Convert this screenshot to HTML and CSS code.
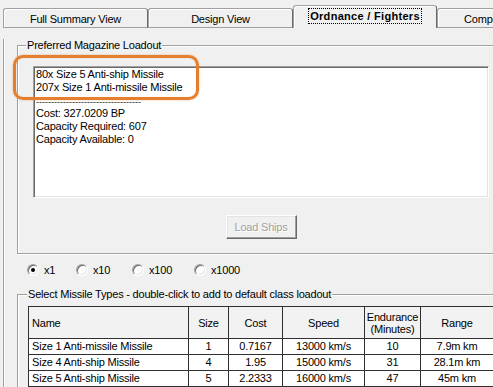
FILE: index.html
```html
<!DOCTYPE html>
<html>
<head>
<meta charset="utf-8">
<link rel="stylesheet" href="styles.css">
</head>
<body>
<div class="window">
  <div class="tabstrip">
    <div class="tab">Full Summary View</div>
    <div class="tab">Design View</div>
    <div class="tab active"><span class="focus">Ordnance / Fighters</span></div>
    <div class="tab">Component Design</div>
  </div>
  <div class="page">
    <fieldset class="group loadout">
      <legend>Preferred Magazine Loadout</legend>
      <div class="loadout-body">
        <div class="textbox">
          <div>80x Size 5 Anti-ship Missile</div>
          <div>207x Size 1 Anti-missile Missile</div>
          <div class="dashes">-----------------------------------</div>
          <div>Cost: 327.0209 BP</div>
          <div>Capacity Required: 607</div>
          <div>Capacity Available: 0</div>
        </div>
        <button class="btn" disabled>Load Ships</button>
      </div>
    </fieldset>
    <div class="radios">
      <label class="radio r1"><span class="circle checked"></span>x1</label>
      <label class="radio r2"><span class="circle"></span>x10</label>
      <label class="radio r3"><span class="circle"></span>x100</label>
      <label class="radio r4"><span class="circle"></span>x1000</label>
    </div>
    <fieldset class="group missiles">
      <legend>Select Missile Types - double-click to add to default class loadout</legend>
      <table class="grid">
        <colgroup>
          <col class="c-name"><col class="c-size"><col class="c-cost"><col class="c-speed"><col class="c-end"><col class="c-range">
        </colgroup>
        <thead>
          <tr>
            <th class="left">Name</th>
            <th>Size</th>
            <th>Cost</th>
            <th>Speed</th>
            <th>Endurance<br>(Minutes)</th>
            <th>Range</th>
          </tr>
        </thead>
        <tbody>
          <tr><td class="left">Size 1 Anti-missile Missile</td><td>1</td><td>0.7167</td><td>13000 km/s</td><td>10</td><td>7.9m km</td></tr>
          <tr><td class="left">Size 4 Anti-ship Missile</td><td>4</td><td>1.95</td><td>15000 km/s</td><td>31</td><td>28.1m km</td></tr>
          <tr><td class="left">Size 5 Anti-ship Missile</td><td>5</td><td>2.2333</td><td>16000 km/s</td><td>47</td><td>45m km</td></tr>
        </tbody>
      </table>
    </fieldset>
  </div>
  <div class="highlight"></div>
</div>
</body>
</html>
```

FILE: styles.css
```css
html, body {
  margin: 0;
  padding: 0;
  background: #f0f0f0;
}
body {
  width: 493px;
  height: 387px;
  overflow: hidden;
  font-family: "Liberation Sans", Arial, sans-serif;
  font-size: 11px;
  letter-spacing: -0.2px;
  color: #000;
}
.window {
  position: relative;
  width: 493px;
  height: 387px;
  overflow: hidden;
}
.tabstrip {
  display: flex;
  align-items: flex-end;
  height: 28px;
  padding-left: 3px;
  width: 700px;
}
.tab {
  box-sizing: border-box;
  flex: 0 0 auto;
  width: 145px;
  height: 20px;
  border-top: 1px solid #a0a0a0;
  border-left: 1px solid #a0a0a0;
  border-right: 1px solid #696969;
  border-bottom: 1px solid #a0a0a0;
  border-radius: 3px 3px 0 0;
  box-shadow: inset 1px 1px 0 #fff;
  display: flex;
  align-items: center;
  justify-content: center;
  white-space: nowrap;
  padding-top: 1px;
}
.tab.active {
  height: 23px;
  border-bottom: none;
  font-weight: bold;
  letter-spacing: 0.3px;
  width: 144px;
  padding-top: 0;
  padding-bottom: 3px;
}
.focus {
  outline: 1px dotted #000;
  outline-offset: 0;
  padding: 0 1px;
  line-height: 14px;
}
.page {
  margin-left: 3px;
  border-left: 1px solid #a0a0a0;
  box-shadow: inset 1px 0 0 #fff;
  padding-left: 13px;
  height: 400px;
}
.group {
  margin: 0;
  border: 1px solid #a0a0a0;
  box-shadow: 1px 1px 0 #fff, inset 1px 1px 0 #fff;
  width: 520px;
  box-sizing: border-box;
  min-width: 0;
}
.group legend {
  line-height: 13px;
  padding: 0 1px;
  background: #f0f0f0;
  white-space: nowrap;
}
.loadout {
  margin-top: 11px;
  padding: 14px 0 14px 15px;
}
.loadout legend {
  margin-left: -7px;
}
.loadout-body {
  width: 456px;
  display: flex;
  flex-direction: column;
  align-items: center;
}
.textbox {
  box-sizing: border-box;
  align-self: stretch;
  height: 132px;
  background: #fff;
  border-top: 1px solid #a0a0a0;
  border-left: 1px solid #a0a0a0;
  border-right: 1px solid #fff;
  border-bottom: 1px solid #fff;
  box-shadow: inset 1px 1px 0 #696969, inset -1px -1px 0 #e3e3e3;
  padding: 1px 0 0 2px;
  line-height: 13px;
}
.dashes {
  letter-spacing: 0;
  font-size: 9px;
  line-height: 13px;
  padding-top: 2px;
  height: 11px;
  color: #222;
}
.btn {
  margin-top: 17px;
  box-sizing: border-box;
  width: 71px;
  height: 24px;
  font: inherit;
  letter-spacing: -0.2px;
  background: #f0f0f0;
  color: #a0a0a0;
  text-shadow: 1px 1px 0 #fff;
  border: 1px solid;
  border-color: #fff #696969 #696969 #fff;
  box-shadow: inset -1px -1px 0 #a0a0a0, inset 1px 1px 0 #e3e3e3;
  padding: 0;
}
.radios {
  display: flex;
  align-items: center;
  height: 16px;
  margin-top: 8px;
  padding-left: 10px;
}
.radio {
  display: flex;
  align-items: center;
  gap: 5px;
  flex: 0 0 auto;
}
.r1 { width: 49px; }
.r2 { width: 56px; }
.r3 { width: 62px; }
.circle {
  position: relative;
  box-sizing: border-box;
  width: 12px;
  height: 12px;
  border-radius: 50%;
  background: #fff;
  border: 1px solid;
  border-color: #a0a0a0 #fff #fff #a0a0a0;
  box-shadow: inset 1px 1px 0 #696969, inset -1px -1px 0 #e3e3e3;
}
.circle.checked::after {
  content: "";
  position: absolute;
  left: 3px;
  top: 3px;
  width: 4px;
  height: 4px;
  border-radius: 50%;
  background: #000;
}
.missiles {
  margin-top: 10px;
  padding: 5px 0 0 10px;
  height: 140px;
}
.missiles legend {
  margin-left: -1px;
}
.grid {
  border-collapse: collapse;
  table-layout: fixed;
  width: 465px;
  background: #fff;
  border-top: 1px solid #303030;
  border-left: 1px solid #303030;
}
.c-name { width: 160px; }
.c-size { width: 40px; }
.c-cost { width: 54px; }
.c-speed { width: 82px; }
.c-end { width: 56px; }
.c-range { width: 73px; }
.grid th, .grid td {
  border: 1px solid #303030;
  padding: 0;
  text-align: center;
  white-space: nowrap;
  overflow: hidden;
}
.grid th {
  font-weight: normal;
  background: #f2f2f2;
  height: 31px;
  line-height: 12px;
}
.grid td {
  height: 15px;
  line-height: 15px;
}
.grid .left {
  text-align: left;
  padding-left: 3px;
}
.highlight {
  position: absolute;
  left: 13px;
  top: 55px;
  width: 186px;
  height: 45px;
  box-sizing: border-box;
  border: 3px solid #e47f30;
  border-radius: 10px;
  box-shadow: 0 0 2px rgba(228, 127, 48, 0.6), inset 0 0 1px rgba(228, 127, 48, 0.5);
}
```
